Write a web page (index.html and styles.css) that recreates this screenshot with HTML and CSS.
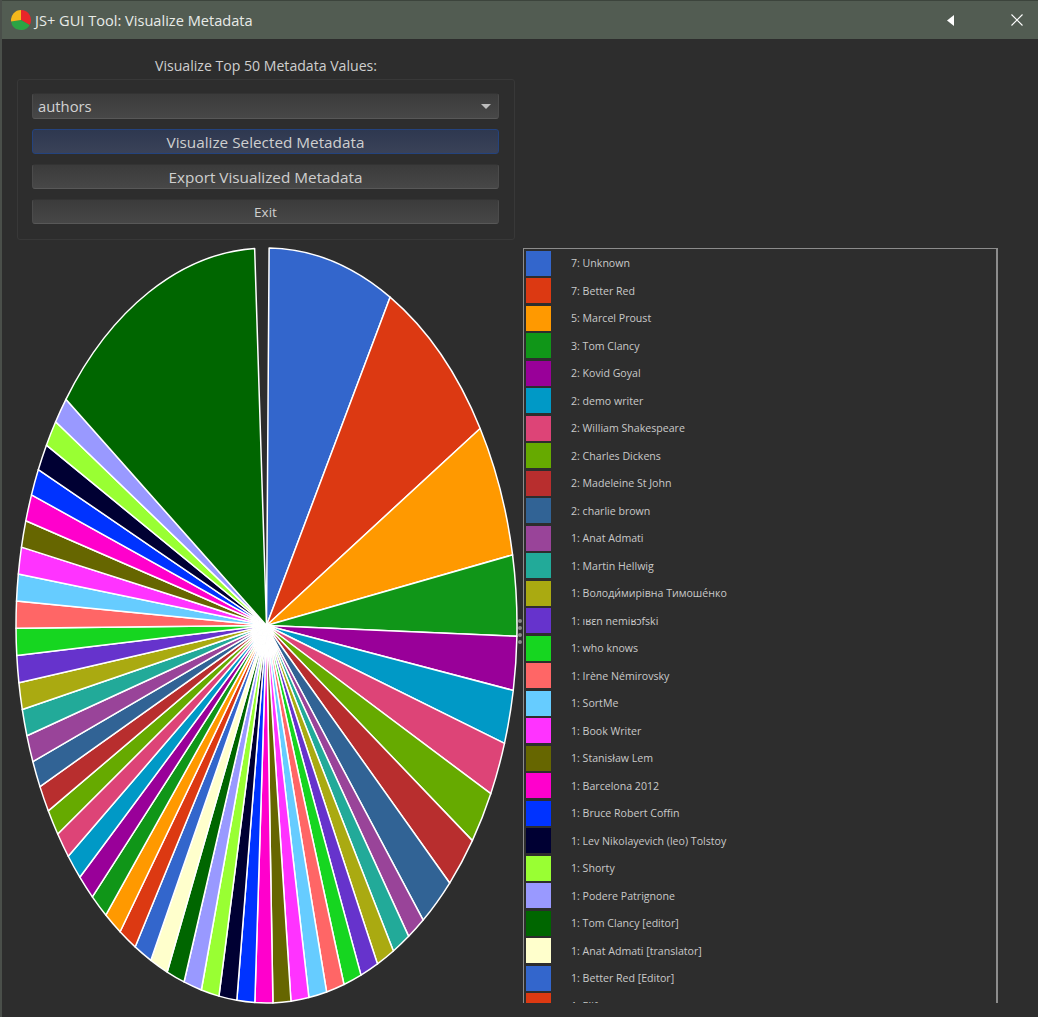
FILE: index.html
```html
<!DOCTYPE html>
<html lang="en">
<head>
<meta charset="utf-8">
<title>JS+ GUI Tool: Visualize Metadata</title>
<link rel="stylesheet" href="styles.css">
</head>
<body>
<div class="window">
  <header class="titlebar">
    <svg class="app-icon" viewBox="0 0 20 20" aria-hidden="true">
      <path class="icon-red" d="M10 10V0a10 10 0 0 1 8.66 15Z"/>
      <path class="icon-green" d="M10 10l8.66 5A10 10 0 0 1 0.1 11.4Z"/>
      <path class="icon-yellow" d="M10 10L0.1 11.4A10 10 0 0 1 10 0Z"/>
    </svg>
    <span class="title">JS+ GUI Tool: Visualize Metadata</span>
    <svg class="tb-collapse" viewBox="0 0 7 11" aria-hidden="true"><path d="M7 0V11L0 5.5Z"/></svg>
    <svg class="tb-close" viewBox="0 0 12 12" aria-hidden="true"><path d="M0.5 0.5L11.5 11.5M11.5 0.5L0.5 11.5"/></svg>
  </header>
  <main class="content">
    <section class="controls">
      <div class="heading">Visualize Top 50 Metadata Values:</div>
      <div class="group">
        <div class="combo"><span>authors</span><i class="combo-arrow"></i></div>
        <button class="btn btn-focus">Visualize Selected Metadata</button>
        <button class="btn">Export Visualized Metadata</button>
        <button class="btn btn-small">Exit</button>
      </div>
    </section>
    <section class="split">
      <svg id="pie" class="pie" viewBox="0 0 503 756" aria-label="Pie chart"></svg>
      <div class="handle"><b></b><b></b><b></b><b></b></div>
      <ul class="legend">
        <li><i class="c0"></i>7: Unknown</li>
        <li><i class="c1"></i>7: Better Red</li>
        <li><i class="c2"></i>5: Marcel Proust</li>
        <li><i class="c3"></i>3: Tom Clancy</li>
        <li><i class="c4"></i>2: Kovid Goyal</li>
        <li><i class="c5"></i>2: demo writer</li>
        <li><i class="c6"></i>2: William Shakespeare</li>
        <li><i class="c7"></i>2: Charles Dickens</li>
        <li><i class="c8"></i>2: Madeleine St John</li>
        <li><i class="c9"></i>2: charlie brown</li>
        <li><i class="c10"></i>1: Anat Admati</li>
        <li><i class="c11"></i>1: Martin Hellwig</li>
        <li><i class="c12"></i>1: Володи́мирівна Тимоше́нко</li>
        <li><i class="c13"></i>1: ıʁɛn nemiʁɔfski</li>
        <li><i class="c14"></i>1: who knows</li>
        <li><i class="c15"></i>1: Irène Némirovsky</li>
        <li><i class="c16"></i>1: SortMe</li>
        <li><i class="c17"></i>1: Book Writer</li>
        <li><i class="c18"></i>1: Stanisław Lem</li>
        <li><i class="c19"></i>1: Barcelona 2012</li>
        <li><i class="c20"></i>1: Bruce Robert Coffin</li>
        <li><i class="c21"></i>1: Lev Nikolayevich (leo) Tolstoy</li>
        <li><i class="c22"></i>1: Shorty</li>
        <li><i class="c23"></i>1: Podere Patrignone</li>
        <li><i class="c24"></i>1: Tom Clancy [editor]</li>
        <li><i class="c25"></i>1: Anat Admati [translator]</li>
        <li><i class="c0"></i>1: Better Red [Editor]</li>
        <li><i class="c1"></i>1: Elif</li>
      </ul>
    </section>
  </main>
</div>
<script src="chart.js"></script>
</body>
</html>
```
FILE: styles.css
```css
* { box-sizing: border-box; }
html, body { margin: 0; height: 100%; background: #2d2d2d; overflow: hidden; }
body { font-family: "Open Sans", "Noto Sans", sans-serif; color: #cfcfcf; }

.window { height: 1017px; display: flex; flex-direction: column; border-left: 2px solid #4a4f4a; }

.titlebar { height: 39px; flex: none; display: flex; align-items: center; background: #525c52; border-top: 1px solid #3c443c; padding-left: 9px; }
.app-icon { width: 20px; height: 20px; flex: none; }
.icon-red { fill: #e8262a; }
.icon-green { fill: #2ca444; }
.icon-yellow { fill: #f5b81c; }
.title { margin-left: 4px; font-size: 14.6px; color: #e8ebe8; flex: 1; }
.tb-collapse { width: 7px; height: 11px; fill: #fff; flex: none; margin-right: 57px; }
.tb-close { width: 12px; height: 12px; flex: none; margin-right: 15px; stroke: #fff; stroke-width: 1.1; fill: none; }

.content { flex: 1; min-height: 0; display: flex; flex-direction: column; padding-left: 12px; }
.controls { width: 498px; margin-left: 3px; }
.heading { height: 40px; padding-top: 17px; text-align: center; font-size: 14.1px; line-height: 20px; color: #cfcfcf; }
.group { height: 161px; border: 1px solid #383838; border-radius: 3px; padding: 13px 15px 0 14px; display: flex; flex-direction: column; gap: 10px; }

.combo { height: 26px; flex: none; display: flex; align-items: center; justify-content: space-between; padding: 0 7px 0 5px; font-size: 14.8px; border: 1px solid #4b4b4b; border-top-color: #333; border-bottom-color: #585858; border-radius: 3px; background: linear-gradient(#3b3b3b, #474747); color: #d2d2d2; }
.combo-arrow { width: 0; height: 0; border-left: 5.5px solid transparent; border-right: 5.5px solid transparent; border-top: 5px solid #bdbdbd; }

.btn { height: 25px; flex: none; padding: 0; font-family: inherit; font-size: 15.3px; color: #cfcfcf; border: 1px solid #4b4b4b; border-top-color: #333; border-bottom-color: #585858; border-radius: 3px; background: linear-gradient(#3b3b3b, #474747); }
.btn-focus { border-color: #24437e; background: linear-gradient(#2e3850, #3a4258); }
.btn-small { font-size: 13.5px; }

.split { height: 756px; margin-top: 8px; display: flex; }
.pie { width: 503px; height: 756px; flex: none; display: block; overflow: visible; }
.pie path { stroke: #fff; stroke-width: 1.5; stroke-linejoin: round; }

.handle { width: 5px; flex: none; display: flex; flex-direction: column; align-items: center; justify-content: center; gap: 3px; padding-top: 10px; margin-right: 1px; }
.handle b { width: 4px; height: 4px; border-radius: 50%; background: #8a8a8a; }

.legend { width: 475px; height: 755px; flex: none; margin: 0; padding: 0.5px 0 0 2px; list-style: none; overflow: hidden; border: solid #8c8c8c; border-width: 1px 2px 0 1px; font-size: 10.6px; color: #c9c9c9; }
.legend li { height: 27.5px; display: flex; align-items: center; white-space: nowrap; }
.legend i { width: 25px; height: 25px; flex: none; margin-right: 20px; }

.c0 { fill: #3366cc; background: #3366cc; }
.c1 { fill: #dc3912; background: #dc3912; }
.c2 { fill: #ff9900; background: #ff9900; }
.c3 { fill: #109618; background: #109618; }
.c4 { fill: #990099; background: #990099; }
.c5 { fill: #0099c6; background: #0099c6; }
.c6 { fill: #dd4477; background: #dd4477; }
.c7 { fill: #66aa00; background: #66aa00; }
.c8 { fill: #b82e2e; background: #b82e2e; }
.c9 { fill: #316395; background: #316395; }
.c10 { fill: #994499; background: #994499; }
.c11 { fill: #22aa99; background: #22aa99; }
.c12 { fill: #aaaa11; background: #aaaa11; }
.c13 { fill: #6633cc; background: #6633cc; }
.c14 { fill: #16d620; background: #16d620; }
.c15 { fill: #ff6666; background: #ff6666; }
.c16 { fill: #66ccff; background: #66ccff; }
.c17 { fill: #ff33ff; background: #ff33ff; }
.c18 { fill: #666600; background: #666600; }
.c19 { fill: #ff00cc; background: #ff00cc; }
.c20 { fill: #0033ff; background: #0033ff; }
.c21 { fill: #000033; background: #000033; }
.c22 { fill: #99ff33; background: #99ff33; }
.c23 { fill: #9999ff; background: #9999ff; }
.c24 { fill: #006600; background: #006600; }
.c25 { fill: #ffffcc; background: #ffffcc; }
```
FILE: chart.js
```js
(function () {
  var NS = "http://www.w3.org/2000/svg";
  var svg = document.getElementById("pie");
  var cx = 252.5, cy = 377.5, rx = 250.5, ry = 377.5;
  var unit = 360 / 87;
  var values = [7, 7, 5, 3, 2, 2, 2, 2, 2, 2];
  for (var n = 0; n < 40; n++) values.push(1);
  values.push(12.2);

  function pt(deg) {
    var r = deg * Math.PI / 180;
    return (cx + rx * Math.sin(r)).toFixed(2) + " " + (cy - ry * Math.cos(r)).toFixed(2);
  }

  var angle = 0.6;
  values.forEach(function (v, i) {
    var next = angle + v * unit;
    var p = document.createElementNS(NS, "path");
    var large = next - angle > 180 ? 1 : 0;
    p.setAttribute("d", "M" + cx + " " + cy + "L" + pt(angle) + "A" + rx + " " + ry + " 0 " + large + " 1 " + pt(next) + "Z");
    p.setAttribute("class", "c" + (i % 26));
    svg.appendChild(p);
    angle = next;
  });
})();
```
